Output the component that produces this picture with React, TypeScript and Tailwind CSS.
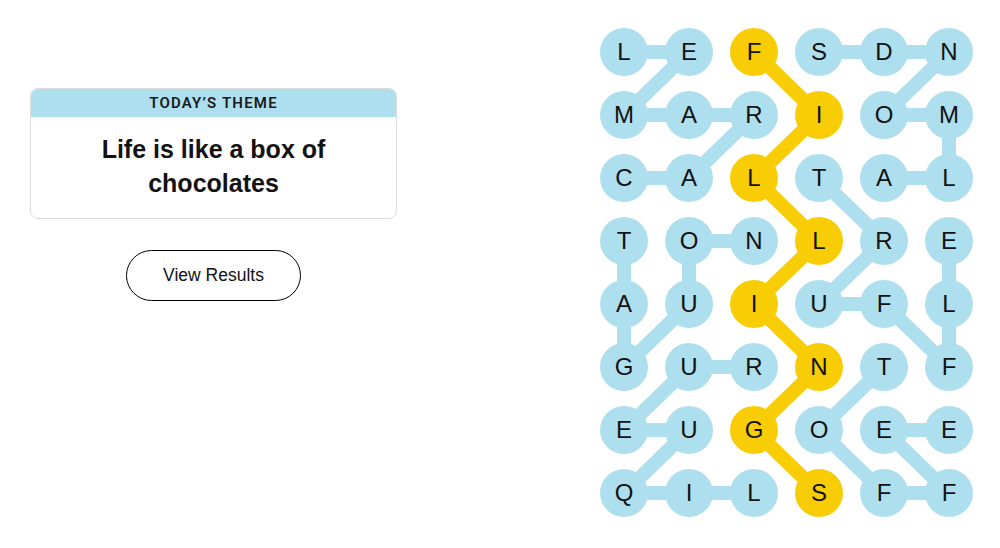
import React from "react";

const board = [
  "LEFSDN",
  "MARIOM",
  "CALTAL",
  "TONLRE",
  "AUIUFL",
  "GURNTF",
  "EUGOEE",
  "QILSFF",
];

const spangram: [number, number][] = [
  [0, 2], [1, 3], [2, 2], [3, 3], [4, 2], [5, 3], [6, 2], [7, 3],
];

const words: [number, number][][] = [
  // CARAMEL
  [[2, 0], [2, 1], [1, 2], [1, 1], [1, 0], [0, 1], [0, 0]],
  // ALMONDS
  [[2, 4], [2, 5], [1, 5], [1, 4], [0, 5], [0, 4], [0, 3]],
  // TRUFFLE
  [[2, 3], [3, 4], [4, 3], [4, 4], [5, 5], [4, 5], [3, 5]],
  // NOUGAT
  [[3, 2], [3, 1], [4, 1], [5, 0], [4, 0], [3, 0]],
  // LIQUEUR
  [[7, 2], [7, 1], [7, 0], [6, 1], [6, 0], [5, 1], [5, 2]],
  // TOFFEE
  [[5, 4], [6, 3], [7, 4], [7, 5], [6, 4], [6, 5]],
];

const BLUE = "#aedfee";
const YELLOW = "#f8cd05";

const cx = (c: number) => 24 + 65 * c;
const cy = (r: number) => 24 + 63 * r;

function Path({ pts, color }: { pts: [number, number][]; color: string }) {
  const d = pts.map(([r, c], i) => `${i === 0 ? "M" : "L"}${cx(c)} ${cy(r)}`).join(" ");
  return (
    <path d={d} stroke={color} strokeWidth={14} fill="none" strokeLinecap="round" strokeLinejoin="round" />
  );
}

export default function App() {
  const isSpan = (r: number, c: number) => spangram.some(([a, b]) => a === r && b === c);
  return (
    <div
      className="w-[1000px] h-[548px] bg-white flex text-[#121212]"
      style={{ fontFamily: '"Liberation Sans", Arial, sans-serif' }}
    >
      <div className="w-[600px] pl-[30px] pt-[88px] flex flex-col">
        <div className="w-[367px] rounded-lg border border-[#dcdcdc] overflow-hidden">
          <div
            className="h-[28px] bg-[#aedfee] flex items-center justify-center text-[15px] font-semibold tracking-[1.2px] text-[#1a1a1a] pt-[1px]"
            style={{ fontFamily: 'Roboto, "Liberation Sans", sans-serif' }}
          >
            TODAY’S THEME
          </div>
          <div className="h-[101px] flex items-center justify-center px-6 text-center text-[25px] leading-[34px] font-bold pb-[4px]">
            Life is like a box of
            <br />
            chocolates
          </div>
        </div>
        <div className="w-[367px] flex justify-center mt-[31px]">
          <button className="w-[175px] h-[51px] rounded-full border border-black text-[17.5px] text-[#121212] bg-white">
            View Results
          </button>
        </div>
      </div>
      <div className="pt-[28px]">
        <div className="relative w-[373px] h-[489px]">
          <svg className="absolute inset-0" width={373} height={489}>
            {words.map((w, i) => (
              <Path key={i} pts={w} color={BLUE} />
            ))}
            <Path pts={spangram} color={YELLOW} />
          </svg>
          <div className="relative grid grid-cols-[repeat(6,48px)] grid-rows-[repeat(8,48px)] gap-x-[17px] gap-y-[15px]">
            {board.map((row, r) =>
              row.split("").map((ch, c) => (
                <div
                  key={`${r}-${c}`}
                  className={`w-[48px] h-[48px] rounded-full flex items-center justify-center text-[24px] ${
                    isSpan(r, c) ? "bg-[#f8cd05]" : "bg-[#aedfee]"
                  }`}
                >
                  {ch}
                </div>
              ))
            )}
          </div>
        </div>
      </div>
    </div>
  );
}
